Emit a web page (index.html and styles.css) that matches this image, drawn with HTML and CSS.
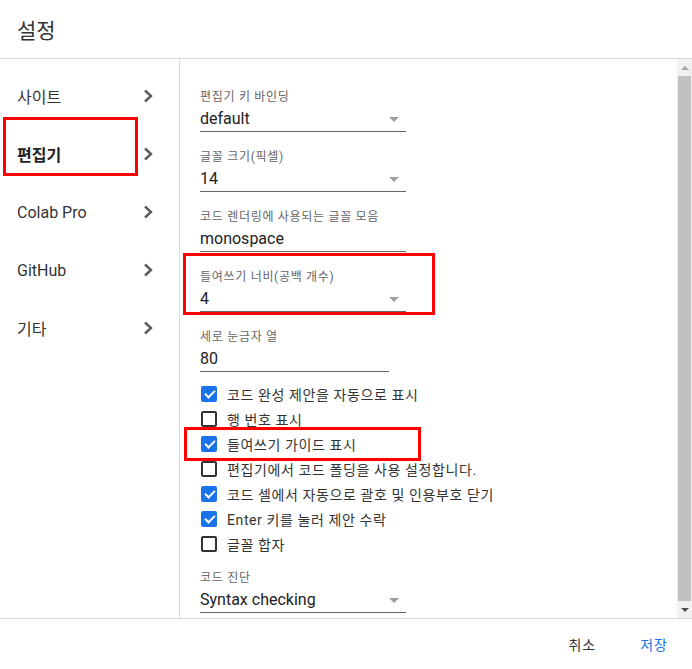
FILE: index.html
```html
<!DOCTYPE html>
<html lang="ko">
<head>
    <meta charset="UTF-8">
    <meta name="viewport" content="width=device-width, initial-scale=1.0">
    <title>설정</title>
    <link rel="stylesheet" href="styles.css">
</head>
<body>
    <div class="dialog">
        <header class="dialog-header">
            <h1>설정</h1>
        </header>

        <div class="dialog-body">
            <!-- 왼쪽 메뉴 -->
            <nav class="sidebar">
                <a class="side-item" href="#">사이트
                    <svg class="chevron" viewBox="0 0 10 14"><polyline points="2,1.5 8,7 2,12.5"/></svg>
                </a>
                <a class="side-item active" href="#">편집기
                    <svg class="chevron" viewBox="0 0 10 14"><polyline points="2,1.5 8,7 2,12.5"/></svg>
                </a>
                <a class="side-item" href="#">Colab Pro
                    <svg class="chevron" viewBox="0 0 10 14"><polyline points="2,1.5 8,7 2,12.5"/></svg>
                </a>
                <a class="side-item" href="#">GitHub
                    <svg class="chevron" viewBox="0 0 10 14"><polyline points="2,1.5 8,7 2,12.5"/></svg>
                </a>
                <a class="side-item" href="#">기타
                    <svg class="chevron" viewBox="0 0 10 14"><polyline points="2,1.5 8,7 2,12.5"/></svg>
                </a>
            </nav>

            <!-- 편집기 설정 -->
            <section class="content">
                <div class="field">
                    <div class="field-label">편집기 키 바인딩</div>
                    <div class="field-value">default <span class="arrow"></span></div>
                </div>
                <div class="field">
                    <div class="field-label">글꼴 크기(픽셀)</div>
                    <div class="field-value">14 <span class="arrow"></span></div>
                </div>
                <div class="field">
                    <div class="field-label">코드 렌더링에 사용되는 글꼴 모음</div>
                    <div class="field-value">monospace</div>
                </div>
                <div class="field">
                    <div class="field-label">들여쓰기 너비(공백 개수)</div>
                    <div class="field-value">4 <span class="arrow"></span></div>
                </div>
                <div class="field field-tight">
                    <div class="field-label">세로 눈금자 열</div>
                    <div class="field-value short">80</div>
                </div>

                <ul class="checks">
                    <li><span class="box checked"></span>코드 완성 제안을 자동으로 표시</li>
                    <li><span class="box"></span>행 번호 표시</li>
                    <li><span class="box checked"></span>들여쓰기 가이드 표시</li>
                    <li><span class="box"></span>편집기에서 코드 폴딩을 사용 설정합니다.</li>
                    <li><span class="box checked"></span>코드 셀에서 자동으로 괄호 및 인용부호 닫기</li>
                    <li><span class="box checked"></span>Enter 키를 눌러 제안 수락</li>
                    <li><span class="box"></span>글꼴 합자</li>
                </ul>

                <div class="field">
                    <div class="field-label">코드 진단</div>
                    <div class="field-value">Syntax checking <span class="arrow"></span></div>
                </div>
            </section>

            <div class="scrollbar">
                <div class="sb-btn"><span class="sb-up"></span></div>
                <div class="sb-thumb"></div>
                <div class="sb-btn"><span class="sb-down"></span></div>
            </div>
        </div>

        <footer class="dialog-footer">
            <button class="btn">취소</button>
            <button class="btn primary">저장</button>
        </footer>

        <!-- 강조 표시 -->
        <div class="mark mark-menu"></div>
        <div class="mark mark-indent"></div>
        <div class="mark mark-guide"></div>
    </div>
</body>
</html>
```

FILE: styles.css
```css
body {
    margin: 0;
    padding: 0;
    background-color: #fff;
    font-family: Roboto, "Noto Sans CJK KR", sans-serif;
    color: #212121;
}

.dialog {
    position: relative;
    width: 692px;
    height: 669px;
    overflow: hidden;
}

.dialog-header {
    height: 58px;
    border-bottom: 1px solid #dadada;
    display: flex;
    align-items: center;
    padding: 3px 0 0 17px;
    box-sizing: border-box;
    height: 59px;
}

.dialog-header h1 {
    margin: 0;
    font-size: 21px;
    font-weight: 400;
    line-height: 24px;
    color: #333;
}

.dialog-body {
    display: flex;
    height: 559px;
}

.sidebar {
    width: 179px;
    border-right: 1px solid #dadada;
    padding-top: 8px;
}

.side-item {
    display: flex;
    align-items: center;
    justify-content: space-between;
    height: 58px;
    padding: 0 26px 0 17px;
    font-size: 16px;
    color: #333;
    text-decoration: none;
}

.side-item.active {
    font-weight: 700;
    color: #222;
}

.chevron {
    width: 10px;
    height: 14px;
    fill: none;
    stroke: #5a5a5a;
    stroke-width: 2.4;
}

.content {
    flex: 1;
    padding: 30px 0 0 20px;
    overflow: hidden;
}

.field {
    width: 206px;
    margin-bottom: 17px;
}

.field-tight {
    margin-bottom: 9px;
}

.field-label {
    font-size: 12px;
    line-height: 16px;
    letter-spacing: 0.7px;
    color: #666;
}

.field-value {
    display: flex;
    align-items: center;
    justify-content: space-between;
    margin-top: 4px;
    padding-bottom: 2px;
    border-bottom: 1px solid #666;
    font-size: 16px;
    line-height: 20px;
    color: #222;
}

.field-value.short {
    width: 189px;
}

.arrow {
    width: 0;
    height: 0;
    margin-right: 7px;
    border-left: 5px solid transparent;
    border-right: 5px solid transparent;
    border-top: 5px solid #9e9e9e;
}

.checks {
    list-style: none;
    margin: 0 0 14px 0;
    padding: 0;
}

.checks li {
    display: flex;
    align-items: center;
    height: 25px;
    font-size: 14px;
    letter-spacing: 0.6px;
    color: #333;
}

.box {
    width: 16px;
    height: 16px;
    margin: 0 10px 0 1px;
    border: 2px solid #333;
    border-radius: 2px;
    box-sizing: border-box;
    position: relative;
}

.box.checked {
    background-color: #1a73e8;
    border-color: #1a73e8;
}

.box.checked::after {
    content: "";
    position: absolute;
    left: 4px;
    top: 0px;
    width: 4px;
    height: 8px;
    border-right: 2px solid #fff;
    border-bottom: 2px solid #fff;
    transform: rotate(45deg);
}

.scrollbar {
    width: 15px;
    background-color: #f1f1f1;
    display: flex;
    flex-direction: column;
}

.sb-btn {
    height: 17px;
    display: flex;
    align-items: center;
    justify-content: center;
}

.sb-up {
    border-left: 4px solid transparent;
    border-right: 4px solid transparent;
    border-bottom: 4px solid #a3a3a3;
}

.sb-down {
    border-left: 4px solid transparent;
    border-right: 4px solid transparent;
    border-top: 4px solid #505050;
}

.sb-thumb {
    flex: 1;
    margin: 0 1px 0 1px;
    background-color: #c1c1c1;
}

.dialog-footer {
    height: 50px;
    border-top: 1px solid #dadada;
    display: flex;
    align-items: center;
    justify-content: flex-end;
    gap: 20px;
    padding-right: 12px;
}

.btn {
    background: none;
    border: none;
    padding: 8px 12px;
    font-family: Roboto, "Noto Sans CJK KR", sans-serif;
    font-size: 14px;
    letter-spacing: 1px;
    color: #333;
}

.btn.primary {
    color: #1a73e8;
}

.mark {
    position: absolute;
    border: 3px solid #f00;
    box-sizing: border-box;
}

.mark-menu {
    left: 3px;
    top: 117px;
    width: 135px;
    height: 59px;
}

.mark-indent {
    left: 183px;
    top: 253px;
    width: 252px;
    height: 62px;
}

.mark-guide {
    left: 184px;
    top: 427px;
    width: 237px;
    height: 34px;
}
```
